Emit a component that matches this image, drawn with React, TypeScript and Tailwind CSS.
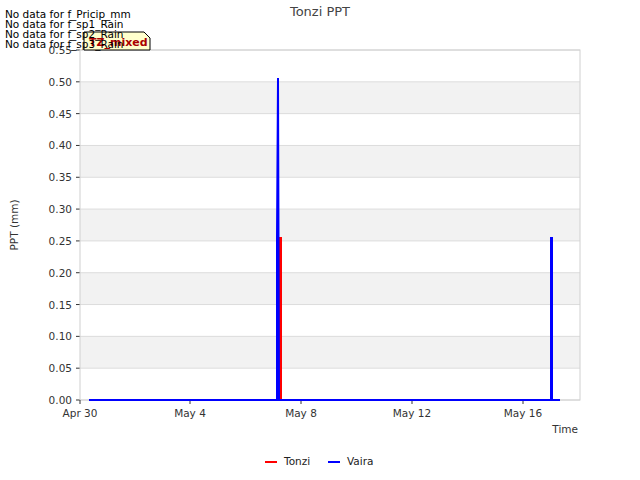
const yTicks = [0, 0.05, 0.1, 0.15, 0.2, 0.25, 0.3, 0.35, 0.4, 0.45, 0.5, 0.55];
const xTicks = [
  { x: 80, label: 'Apr 30' },
  { x: 190, label: 'May 4' },
  { x: 301, label: 'May 8' },
  { x: 412, label: 'May 12' },
  { x: 523, label: 'May 16' },
];
const yOf = (v: number) => 400 - (v / 0.55) * 350;

export default function App() {
  return (
    <div className="relative w-[640px] h-[480px] bg-white" style={{ fontFamily: 'DejaVu Sans, sans-serif' }}>
      <svg width="640" height="480" className="absolute left-0 top-0" fontFamily="DejaVu Sans, sans-serif">
        {yTicks.slice(0, 11).map((v, i) =>
          i % 2 === 1 ? (
            <rect key={v} x="80" y={yOf(yTicks[i + 1])} width="500" height={yOf(v) - yOf(yTicks[i + 1])} fill="#f2f2f2" />
          ) : null
        )}
        {yTicks.map((v) => (
          <g key={v}>
            <line x1="80" x2="580" y1={yOf(v)} y2={yOf(v)} stroke="#dcdcdc" />
            <line x1="76" x2="80" y1={yOf(v)} y2={yOf(v)} stroke="#333" />
            <text x="72" y={yOf(v) + 4} fontSize="10.5" textAnchor="end" fill="#333">{v.toFixed(2)}</text>
          </g>
        ))}
        <rect x="80" y="50" width="500" height="350" fill="none" stroke="#d0d0d0" />
        {xTicks.map((t) => (
          <g key={t.label}>
            <line x1={t.x} x2={t.x} y1="400" y2="404" stroke="#333" />
            <text x={t.x} y="417" fontSize="10.5" textAnchor="middle" fill="#333">{t.label}</text>
          </g>
        ))}
        <text x="578" y="433" fontSize="10.5" textAnchor="end" fill="#333">Time</text>
        <text x="18" y="225" fontSize="10.5" textAnchor="middle" fill="#333" transform="rotate(-90 18 225)">PPT (mm)</text>
        <text x="320" y="16" fontSize="13" textAnchor="middle" fill="#444">Tonzi PPT</text>
        <polyline points="89,400 279,400 279,238 281,238 281,400 560,400" fill="none" stroke="#ff0000" strokeWidth="2" />
        <polyline points="89,400 277,400 277,238 278,78 279,400 551,400 551,238 552,238 552,400 560,400" fill="none" stroke="#0000ff" strokeWidth="2" />
        <line x1="265" x2="277" y1="462" y2="462" stroke="#ff0000" strokeWidth="2" />
        <text x="284" y="465" fontSize="10.5" fill="#222">Tonzi</text>
        <line x1="328" x2="340" y1="462" y2="462" stroke="#0000ff" strokeWidth="2" />
        <text x="347" y="465" fontSize="10.5" fill="#222">Vaira</text>
        <path d="M84 32 H144 L150 38 V50 H84 Z" fill="#ffffcc" stroke="#000" />
        <text x="89" y="46" fontSize="11" fontWeight="bold" fill="#aa0000">TZ_mixed</text>
        {['No data for f_Pricip_mm', 'No data for f_sp1_Rain', 'No data for f_sp2_Rain', 'No data for f_sp3_Rain'].map((s, i) => (
          <text key={s} x="5" y={18 + i * 10} fontSize="10.5" fill="#000">{s}</text>
        ))}
      </svg>
    </div>
  );
}
